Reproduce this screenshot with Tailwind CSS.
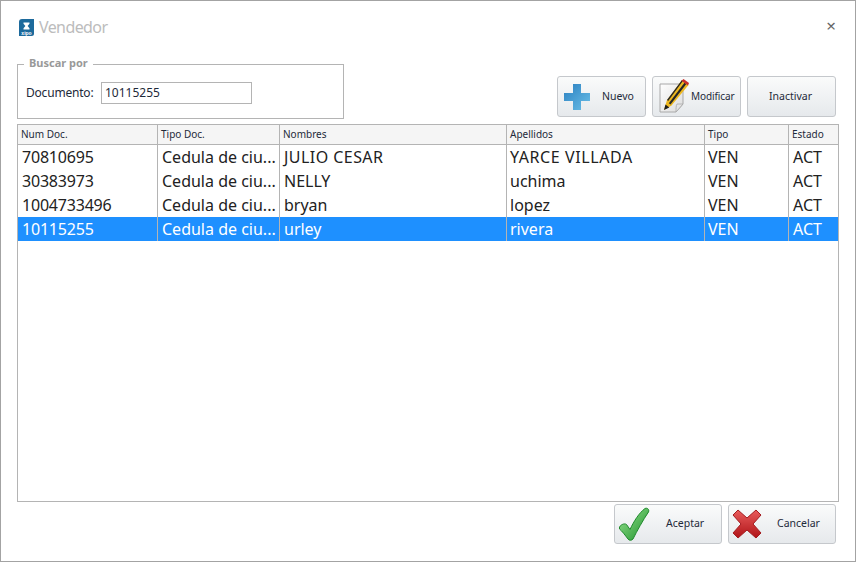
<!DOCTYPE html>
<html>
<head>
<meta charset="utf-8">
<script src="https://cdn.jsdelivr.net/npm/@tailwindcss/browser@4"></script>
</head>
<body class="bg-white">
<div class="w-[856px] h-[562px] border border-[#a3a3a3] bg-white flex flex-col font-['Noto_Sans','DejaVu_Sans',sans-serif] text-[#1e2a3a] overflow-hidden">
  <!-- title -->
  <div class="h-[63px] shrink-0 flex items-start pl-[18px] pr-[18px] pt-[17px]">
    <svg class="w-[15px] h-[17px] mt-[1px]" viewBox="0 0 15 17">
      <path d="M3 0h12v14.500a2.500 2.500 0 0 1-2.500 2.500H0V3a3 3 0 0 1 3-3z" fill="#1d6a9c"/>
      <path d="M4.500 3.500h6v1.200L8.600 7l1.900 2.300v1.200h-6V9.300L6.400 7 4.500 4.700z" fill="#fff"/>
      <text x="7.500" y="15.500" text-anchor="middle" font-size="5" font-weight="700" fill="#fff" font-family="Liberation Sans">xipo</text>
    </svg>
    <span class="ml-[5px] -mt-[1px] text-[16px] tracking-[-0.6px] leading-[20px] text-[#bcbcbc]">Vendedor</span>
    <span class="ml-auto -mt-[1px] mr-[1px] text-[17px] leading-[18px] text-[#666]">×</span>
  </div>
  <!-- toolbar -->
  <div class="h-[60px] shrink-0 flex items-start pl-[16px] pr-[19px]">
    <div class="relative w-[327px] h-[55px] border border-[#b4b4b4] flex items-start pl-[8px] pt-[17px]">
      <span class="absolute left-[6px] -top-[9px] bg-white px-[5px] text-[11px] leading-[14px] font-bold text-[#999]">Buscar por</span>
      <span class="text-[12px] tracking-[-0.2px] leading-[21px] mr-[6px] w-[69px] shrink-0">Documento:</span>
      <div class="w-[151px] h-[22px] border border-[#b4b4b4] pl-[3px] text-[12px] leading-[20px]">10115255</div>
    </div>
    <div class="ml-auto mt-[12px] flex gap-[6px]">
      <button class="w-[89px] h-[41px] rounded-[3px] border border-[#c5c8cc] bg-gradient-to-b from-[#fafbfb] to-[#e6e9ec] flex items-center pl-[5px] text-[10.5px]">
        <svg class="w-[28px] h-[28px] shrink-0" viewBox="0 0 28 28">
          <defs><linearGradient id="p" x1="0" y1="0" x2="1" y2="1"><stop offset="0" stop-color="#2a7fc0"/><stop offset="1" stop-color="#6cc0e8"/></linearGradient></defs>
          <path d="M10 1h8v9h9v8h-9v9h-8v-9H1v-8h9z" fill="url(#p)"/>
        </svg>
        <span class="ml-[11px]">Nuevo</span>
      </button>
      <button class="w-[89px] h-[41px] rounded-[3px] border border-[#c5c8cc] bg-gradient-to-b from-[#fafbfb] to-[#e6e9ec] flex items-center pl-[6px] text-[10px]">
        <svg class="w-[30px] h-[36px] shrink-0" viewBox="0 0 30 36">
          <defs><linearGradient id="pg" x1="0" y1="0" x2="1" y2="1"><stop offset="0" stop-color="#fefefe"/><stop offset="1" stop-color="#dcdcdc"/></linearGradient></defs>
          <path d="M1 5h23v20l-7 8H1z" fill="url(#pg)" stroke="#a8a8a8" stroke-width="1"/>
          <path d="M17 33c0-3 0-7 1-8 2 0 4 0 6 0z" fill="#e4e4e4" stroke="#a8a8a8" stroke-width=".8"/>
          <path d="M5 31l3-10L23 1l6.500 5L12.500 26.500z" fill="#eeb81f"/>
          <path d="M9.800 24.300L25.500 3.700l1.800 1.300L11.500 25.600z" fill="#262626"/>
          <path d="M8 21L23 1l1 .8L9.200 22z" fill="#262626"/>
          <path d="M5 31l1.500-5.600 3.800 3.200z" fill="#1c1c1c"/>
          <path d="M22.500 1.700L24.500 0 30 4l-1 2.600z" fill="#c9302c"/>
        </svg>
        <span class="ml-[2px] tracking-[-0.1px]">Modificar</span>
      </button>
      <button class="w-[89px] h-[41px] rounded-[3px] border border-[#c5c8cc] bg-gradient-to-b from-[#fafbfb] to-[#e6e9ec] flex items-center justify-center pr-[2px] text-[10.5px]">Inactivar</button>
    </div>
  </div>
  <!-- table -->
  <div class="mx-[16px] w-[822px] h-[378px] shrink-0 border border-[#b4b4b4] text-[16px] leading-[24px]">
    <div class="flex h-[20px] bg-[#f5f5f5] border-b border-[#b4b4b4] text-[10px] leading-[18px]">
      <div class="w-[140px] border-r border-[#b4b4b4] pl-[3px]">Num Doc.</div>
      <div class="w-[122px] border-r border-[#b4b4b4] pl-[3px]">Tipo Doc.</div>
      <div class="w-[227px] border-r border-[#b4b4b4] pl-[3px]">Nombres</div>
      <div class="w-[198px] border-r border-[#b4b4b4] pl-[3px]">Apellidos</div>
      <div class="w-[84px] border-r border-[#b4b4b4] pl-[3px]">Tipo</div>
      <div class="flex-1 pl-[3px]">Estado</div>
    </div>
    <div class="flex h-[24px] text-[#222]">
      <div class="w-[140px] border-r border-[#b4b4b4] pl-[4px] tracking-[-0.2px]">70810695</div>
      <div class="w-[122px] border-r border-[#b4b4b4] pl-[4px]">Cedula de ciu...</div>
      <div class="w-[227px] border-r border-[#b4b4b4] pl-[4px] tracking-[0.45px]">JULIO CESAR</div>
      <div class="w-[198px] border-r border-[#b4b4b4] pl-[3px] tracking-[0.6px]">YARCE VILLADA</div>
      <div class="w-[84px] border-r border-[#b4b4b4] pl-[3px]">VEN</div>
      <div class="flex-1 pl-[4px]">ACT</div>
    </div>
    <div class="flex h-[24px] text-[#222]">
      <div class="w-[140px] border-r border-[#b4b4b4] pl-[4px] tracking-[-0.2px]">30383973</div>
      <div class="w-[122px] border-r border-[#b4b4b4] pl-[4px]">Cedula de ciu...</div>
      <div class="w-[227px] border-r border-[#b4b4b4] pl-[4px]">NELLY</div>
      <div class="w-[198px] border-r border-[#b4b4b4] pl-[3px]">uchima</div>
      <div class="w-[84px] border-r border-[#b4b4b4] pl-[3px]">VEN</div>
      <div class="flex-1 pl-[4px]">ACT</div>
    </div>
    <div class="flex h-[24px] text-[#222]">
      <div class="w-[140px] border-r border-[#b4b4b4] pl-[4px] tracking-[-0.2px]">1004733496</div>
      <div class="w-[122px] border-r border-[#b4b4b4] pl-[4px]">Cedula de ciu...</div>
      <div class="w-[227px] border-r border-[#b4b4b4] pl-[4px]">bryan</div>
      <div class="w-[198px] border-r border-[#b4b4b4] pl-[3px]">lopez</div>
      <div class="w-[84px] border-r border-[#b4b4b4] pl-[3px]">VEN</div>
      <div class="flex-1 pl-[4px]">ACT</div>
    </div>
    <div class="flex h-[24px] bg-[#1e90ff] text-white">
      <div class="w-[140px] border-r border-[#b4b4b4] pl-[4px] tracking-[-0.2px]">10115255</div>
      <div class="w-[122px] border-r border-[#b4b4b4] pl-[4px]">Cedula de ciu...</div>
      <div class="w-[227px] border-r border-[#b4b4b4] pl-[4px]">urley</div>
      <div class="w-[198px] border-r border-[#b4b4b4] pl-[3px]">rivera</div>
      <div class="w-[84px] border-r border-[#b4b4b4] pl-[3px]">VEN</div>
      <div class="flex-1 pl-[4px]">ACT</div>
    </div>
  </div>
  <!-- footer -->
  <div class="flex justify-end gap-[6px] pr-[19px] pt-[2px]">
    <button class="w-[108px] h-[40px] rounded-[3px] border border-[#c5c8cc] bg-gradient-to-b from-[#fafbfb] to-[#e6e9ec] flex items-center pl-[3px] text-[10.5px]">
      <svg class="w-[32px] h-[34px] shrink-0" viewBox="0 0 32 34">
        <defs><linearGradient id="g" x1="0" y1="0" x2="1" y2="1"><stop offset="0" stop-color="#9ae692"/><stop offset="1" stop-color="#1c8f2a"/></linearGradient></defs>
        <path d="M1.500 20c1.500-2.500 5-4 7-2.500l3.500 5C16 14 21 6 27 1.500c2.500-1 4.500 1 3.500 3.500C25 13 19 24 15 32c-1.500 1.800-4 1.500-5 0C7 28 4 24 1.500 22z" fill="url(#g)" stroke="#1f8a2c" stroke-width="1"/>
      </svg>
      <span class="ml-[16px]">Aceptar</span>
    </button>
    <button class="w-[108px] h-[40px] rounded-[3px] border border-[#c5c8cc] bg-gradient-to-b from-[#fafbfb] to-[#e6e9ec] flex items-center pl-[3px] text-[10.5px]">
      <svg class="w-[30px] h-[30px] shrink-0" viewBox="0 0 30 30">
        <defs><linearGradient id="r" x1="0" y1="0" x2="0" y2="1"><stop offset="0" stop-color="#e85c5c"/><stop offset="1" stop-color="#b01418"/></linearGradient></defs>
        <path d="M1 6l5-5 9 8 9-8 5 5-8 9 8 9-5 5-9-8-9 8-5-5 8-9z" fill="url(#r)" stroke="#a41c20" stroke-width="1"/>
      </svg>
      <span class="ml-[15px]">Cancelar</span>
    </button>
  </div>
</div>
</body>
</html>
